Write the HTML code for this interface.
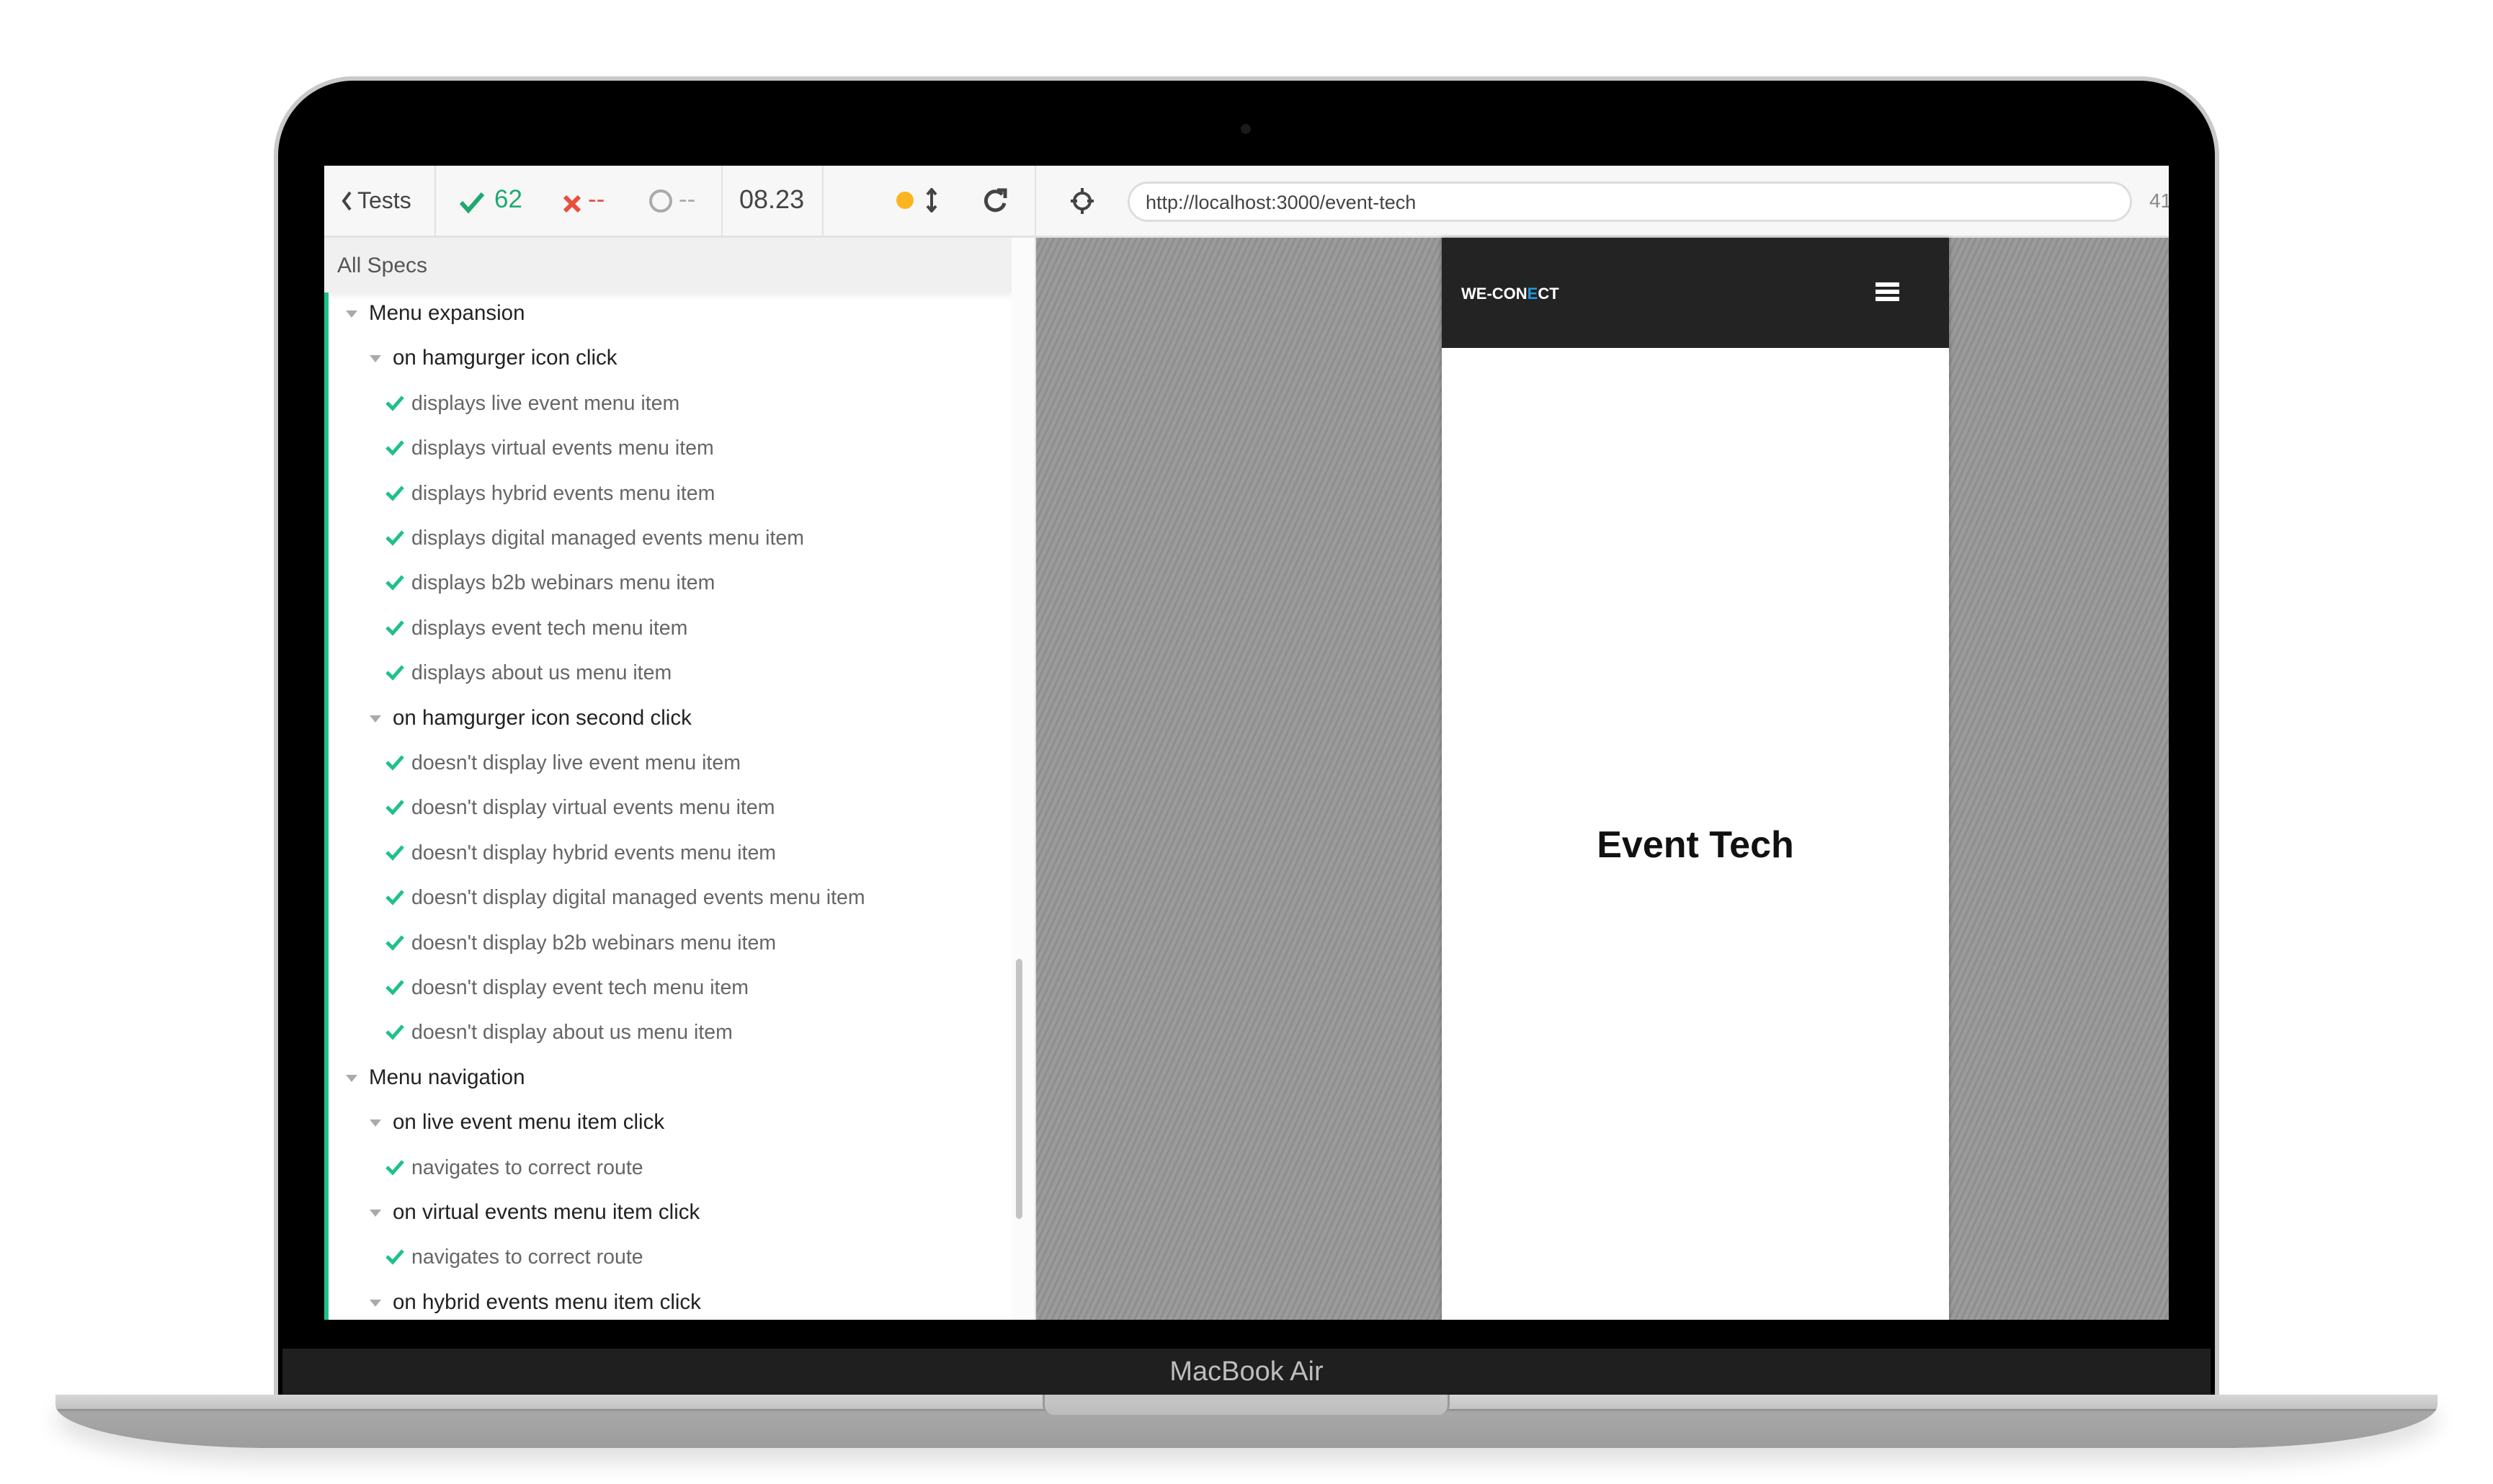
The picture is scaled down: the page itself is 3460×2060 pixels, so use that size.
<!DOCTYPE html>
<html><head><meta charset="utf-8"><style>
*{margin:0;padding:0;box-sizing:border-box}
body{width:3460px;height:2060px;background:#fff;position:relative;overflow:hidden;font-family:"Liberation Sans",sans-serif}
.abs{position:absolute}
#lid{left:380px;top:106px;width:2700px;height:1860px;border-radius:110px 110px 0 0;background:#000;border:6px solid #c9c9c9;border-bottom:none}
#screen{left:450px;top:230px;width:2560px;height:1602px;background:#fff;overflow:hidden}
#chin{left:392px;top:1872px;width:2676px;height:64px;background:#1f1f1f;color:#bdbdbd;font-size:38px;text-align:center;line-height:64px}
#base{left:77px;top:1936px;width:3306px;height:74px;background:linear-gradient(#d6d6d6 0,#c4c4c4 26%,#8a8a8a 28%,#a8a8a8 32%,#9c9c9c 100%);border-radius:0 0 300px 300px/0 0 60px 60px;box-shadow:0 20px 30px rgba(0,0,0,.12)}
#notch{left:1447px;top:1936px;width:565px;height:28px;background:linear-gradient(#c8c8c8,#bcbcbc);border-radius:0 0 14px 14px;border-left:3px solid #999;border-right:3px solid #999}
.t{position:absolute;white-space:nowrap;font-size:28.5px;line-height:32px}
.h{color:#222;font-size:29.5px}
.i{color:#666}
.tri{position:absolute;width:0;height:0;border-left:8px solid transparent;border-right:8px solid transparent;border-top:10px solid #aaa}
.ck{position:absolute;width:28px;height:24px}
</style></head><body>
<div id="lid" class="abs"></div>
<div class="abs" style="left:1722px;top:172px;width:14px;height:14px;border-radius:7px;background:#1a1a1a"></div>
<div id="screen" class="abs">
 <div class="abs" style="left:0;top:0;width:2560px;height:100px;background:#f7f7f7;border-bottom:3px solid #e2e2e2"></div>
 <div class="abs" style="left:153px;top:0;width:2px;height:100px;background:#e2e2e2"></div>
 <div class="abs" style="left:551px;top:0;width:2px;height:100px;background:#e2e2e2"></div>
 <div class="abs" style="left:691px;top:0;width:2px;height:100px;background:#e2e2e2"></div>
 <div class="abs" style="left:986px;top:0;width:2px;height:1602px;background:#e2e2e2"></div>
 <svg class="abs" style="left:22px;top:34px" width="20" height="30"><path d="M14 3 L5 15 L14 27" stroke="#444" stroke-width="4" fill="none"/></svg>
 <div class="t" style="left:46px;top:32px;font-size:32px;color:#444">Tests</div>
 <svg class="abs" style="left:187px;top:36px" width="36" height="30"><path d="M3 15 L13 26 L33 3" stroke="#1fa971" stroke-width="6" fill="none"/></svg>
 <div class="t" style="left:236px;top:31px;font-size:35px;color:#1fa971">62</div>
 <svg class="abs" style="left:331px;top:40px" width="26" height="26"><path d="M3 3 L23 23 M23 3 L3 23" stroke="#e94f3b" stroke-width="6"/></svg>
 <div class="t" style="left:366px;top:31px;font-size:35px;color:#e94f3b">--</div>
 <svg class="abs" style="left:450px;top:31px" width="34" height="36"><circle cx="17" cy="18" r="14" stroke="#aaa" stroke-width="4" fill="none"/></svg>
 <div class="t" style="left:492px;top:31px;font-size:35px;color:#aaa">--</div>
 <div class="t" style="left:576px;top:31px;font-size:36px;color:#444">08.23</div>
 <div class="abs" style="left:794px;top:36px;width:24px;height:24px;border-radius:12px;background:#fbb520"></div>
 <svg class="abs" style="left:835px;top:31px" width="16" height="34"><path d="M8 3 V31 M2 9 L8 2 L14 9 M2 25 L8 32 L14 25" stroke="#444" stroke-width="4" fill="none"/></svg>
 <svg class="abs" style="left:914px;top:30px" width="36" height="36"><path d="M27 10 A13 13 0 1 0 30 22" stroke="#444" stroke-width="5" fill="none"/><path d="M20 4 L31 4 L31 15" stroke="#444" stroke-width="5" fill="none"/></svg>
 <svg class="abs" style="left:1033px;top:28px" width="38" height="42"><circle cx="19" cy="21" r="11" stroke="#444" stroke-width="4" fill="none"/><path d="M19 3 V12 M19 30 V39 M3 21 H12 M26 21 H35" stroke="#444" stroke-width="4"/></svg>
 <div class="abs" style="left:1115px;top:22px;width:1394px;height:56px;border-radius:28px;background:#fff;border:3px solid #ddd"></div>
 <div class="t" style="left:1140px;top:35px;font-size:27px;color:#444">http://localhost:3000/event-tech</div>
 <div class="t" style="left:2533px;top:33px;font-size:28px;color:#888">41</div>
 <div class="abs" style="left:0;top:100px;width:954px;height:76px;background:#f0f0f0;box-shadow:0 6px 8px rgba(0,0,0,.06)"></div>
 <div class="t" style="left:18px;top:123px;font-size:30px;color:#555">All Specs</div>
 <div class="abs" style="left:0;top:176px;width:6px;height:1426px;background:#1fc08c"></div>
 <div class="abs" style="left:954px;top:100px;width:32px;height:1502px;background:#fbfbfb"></div>
 <div class="abs" style="left:960px;top:1101px;width:9px;height:361px;border-radius:5px;background:#c4c4c4"></div>
 <div id="rows"></div>
 <div class="abs" style="left:988px;top:100px;width:1572px;height:1502px;background:repeating-linear-gradient(115deg,#9b9b9b 0 5px,#8e8e8e 5px 8px)"></div>
 <div class="abs" style="left:1551px;top:100px;width:704px;height:1502px;background:#fff;box-shadow:0 0 6px rgba(0,0,0,.3)"></div>
 <div class="abs" style="left:1551px;top:100px;width:704px;height:153px;background:#232323"></div>
 <div class="t" style="left:1578px;top:162px;font-size:22px;font-weight:bold;color:#fff">WE-CON<span style="color:#1d9bd7">E</span>CT</div>
 <div class="abs" style="left:2153px;top:162px;width:33px;height:6px;background:#fff"></div>
 <div class="abs" style="left:2153px;top:172px;width:33px;height:6px;background:#fff"></div>
 <div class="abs" style="left:2153px;top:182px;width:33px;height:6px;background:#fff"></div>
 <div class="t" style="left:1551px;width:704px;text-align:center;top:913px;font-size:52px;line-height:60px;font-weight:bold;color:#111">Event Tech</div>
</div>
<div id="chin" class="abs">MacBook Air</div>
<div id="base" class="abs"></div>
<div id="notch" class="abs"></div>
<script>
var rows=[
[0,"Menu expansion"],[1,"on hamgurger icon click"],
[2,"displays live event menu item"],[2,"displays virtual events menu item"],[2,"displays hybrid events menu item"],[2,"displays digital managed events menu item"],[2,"displays b2b webinars menu item"],[2,"displays event tech menu item"],[2,"displays about us menu item"],
[1,"on hamgurger icon second click"],
[2,"doesn't display live event menu item"],[2,"doesn't display virtual events menu item"],[2,"doesn't display hybrid events menu item"],[2,"doesn't display digital managed events menu item"],[2,"doesn't display b2b webinars menu item"],[2,"doesn't display event tech menu item"],[2,"doesn't display about us menu item"],
[0,"Menu navigation"],[1,"on live event menu item click"],[2,"navigates to correct route"],[1,"on virtual events menu item click"],[2,"navigates to correct route"],[1,"on hybrid events menu item click"]];
var h="";
rows.forEach(function(r,k){
 var cy=Math.round(436+k*62.4-230); var lv=r[0];
 if(lv==0){h+='<div class="tri" style="left:30px;top:'+(cy-5)+'px"></div><div class="t h" style="left:62px;top:'+(cy-17)+'px">'+r[1]+'</div>';}
 else if(lv==1){h+='<div class="tri" style="left:63px;top:'+(cy-5)+'px"></div><div class="t h" style="left:95px;top:'+(cy-17)+'px">'+r[1]+'</div>';}
 else{h+='<svg class="ck" style="left:84px;top:'+(cy-14)+'px" viewBox="0 0 28 24"><path d="M3 12 L11 20 L25 4" stroke="#1fc08c" stroke-width="5" fill="none"/></svg><div class="t i" style="left:121px;top:'+(cy-17)+'px">'+r[1]+'</div>';}
});
document.getElementById("rows").outerHTML=h;
</script>
</body></html>
